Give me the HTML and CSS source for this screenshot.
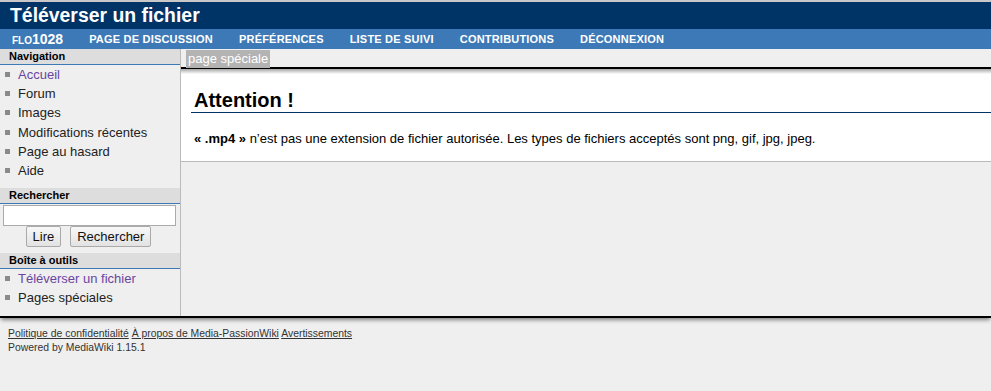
FILE: index.html
```html
<!DOCTYPE html>
<html lang="fr">
<head>
  <meta charset="UTF-8">
  <title>Téléverser un fichier</title>
  <link rel="stylesheet" href="styles.css">
</head>
<body>
  <!-- En-tête -->
  <div id="header">
    <h1 class="site-title">Téléverser un fichier</h1>
  </div>
  <div id="topnav">
    <a class="user" href="#">flo1028</a>
    <a href="#">Page de discussion</a>
    <a href="#">Préférences</a>
    <a href="#">Liste de suivi</a>
    <a href="#">Contributions</a>
    <a href="#">Déconnexion</a>
  </div>

  <div id="main">
    <!-- Colonne de gauche -->
    <div id="sidebar">
      <div class="portlet">
        <h3>Navigation</h3>
        <ul>
          <li><a class="visited" href="#">Accueil</a></li>
          <li><a href="#">Forum</a></li>
          <li><a href="#">Images</a></li>
          <li><a href="#">Modifications récentes</a></li>
          <li><a href="#">Page au hasard</a></li>
          <li><a href="#">Aide</a></li>
        </ul>
      </div>
      <div class="portlet">
        <h3>Rechercher</h3>
        <div class="search">
          <input type="text" class="search-input">
          <div class="search-buttons">
            <button>Lire</button>
            <button>Rechercher</button>
          </div>
        </div>
      </div>
      <div class="portlet">
        <h3>Boîte à outils</h3>
        <ul>
          <li><a class="visited" href="#">Téléverser un fichier</a></li>
          <li><a href="#">Pages spéciales</a></li>
        </ul>
      </div>
    </div>

    <!-- Contenu -->
    <div id="content">
      <div class="tabs"><span class="tab">page spéciale</span></div>
      <div class="bodytext">
        <h2>Attention !</h2>
        <p><b>« .mp4 »</b> n’est pas une extension de fichier autorisée. Les types de fichiers acceptés sont png, gif, jpg, jpeg.</p>
      </div>
    </div>
  </div>

  <div id="footer">
    <div class="links">
      <a href="#">Politique de confidentialité</a>
      <a href="#">À propos de Media-PassionWiki</a>
      <a href="#">Avertissements</a>
    </div>
    <div>Powered by MediaWiki 1.15.1</div>
  </div>
</body>
</html>
```

FILE: styles.css
```css
body {
  margin: 0;
  background-color: #efefef;
  font-family: "Liberation Sans", Arial, sans-serif;
  color: #000;
}
a {
  text-decoration: none;
  color: #222;
}
#header {
  border-top: 2px solid #c8c8c8;
  background-color: #003366;
  height: 27px;
}
.site-title {
  margin: 0;
  padding-left: 10px;
  font-size: 19.4px;
  line-height: 26px;
  color: #fff;
}
#topnav {
  display: flex;
  height: 20px;
  align-items: center;
  background-color: #3d79b6;
}
#topnav a {
  color: #fff;
  font-size: 11px;
  font-weight: bold;
  text-transform: uppercase;
  padding: 0 13px;
  letter-spacing: 0.2px;
}
#topnav a.user {
  font-variant: small-caps;
  text-transform: none;
  font-size: 14px;
  letter-spacing: 0;
  padding-left: 12px;
}
#main {
  display: flex;
  border-bottom: 2px solid #000;
  box-shadow: 0 3px 4px -1px rgba(0, 0, 0, 0.45);
}
#sidebar {
  width: 180px;
  flex-shrink: 0;
  border-right: 1px solid #bbb;
}
.portlet h3 {
  margin: 0;
  padding: 1px 0 1px 9px;
  background-color: #ddd;
  border-bottom: 1px solid #3d79b6;
  font-size: 11px;
  line-height: 13px;
}
.portlet ul {
  margin: 0;
  padding: 0 0 8px 5px;
  list-style: none;
}
.portlet li {
  font-size: 13px;
  line-height: 19.2px;
}
.portlet li::before {
  content: "";
  display: inline-block;
  width: 5px;
  height: 5px;
  background-color: #8a8a8a;
  margin-right: 8px;
  vertical-align: 2px;
}
.portlet a.visited {
  color: #6a45a0;
}
.search {
  padding: 1px 3px 6px 3px;
}
.search-input {
  display: block;
  box-sizing: border-box;
  width: 173px;
  height: 21px;
  margin: 0;
  border: 1px solid #aaa;
  background: #fff;
}
.search-buttons {
  display: flex;
  justify-content: center;
  gap: 9px;
  padding-right: 3px;
}
.search-buttons button {
  font-family: "Liberation Sans", Arial, sans-serif;
  font-size: 13px;
  height: 21px;
  padding: 0 6px;
  border: 1px solid #aaa;
  border-radius: 2px;
  background: linear-gradient(#f8f8f8, #e2e2e2);
  color: #111;
}
#content {
  flex: 1;
  min-width: 0;
}
.tabs {
  height: 18px;
  padding-left: 5px;
  border-bottom: 2px solid #000;
}
.tab {
  display: inline-block;
  background-color: #b3b3b3;
  color: #fff;
  font-size: 13px;
  line-height: 18px;
  padding: 0 2px;
}
.bodytext {
  background-color: #fff;
  border-bottom: 1px solid #bbb;
  padding: 20px 0 15px 10px;
  background-image: linear-gradient(rgba(0, 0, 0, 0.35), rgba(0, 0, 0, 0) 5px);
}
.bodytext h2 {
  margin: 0 0 18px 0;
  padding-left: 3px;
  font-size: 20px;
  line-height: 23px;
  border-bottom: 1px solid #003366;
}
.bodytext p {
  margin: 0 0 0 3px;
  font-size: 13px;
  line-height: 15px;
}
#footer {
  padding: 9px 8px;
  font-size: 10.4px;
  line-height: 14px;
  color: #333;
}
#footer a {
  color: #333;
  text-decoration: underline;
}
```
